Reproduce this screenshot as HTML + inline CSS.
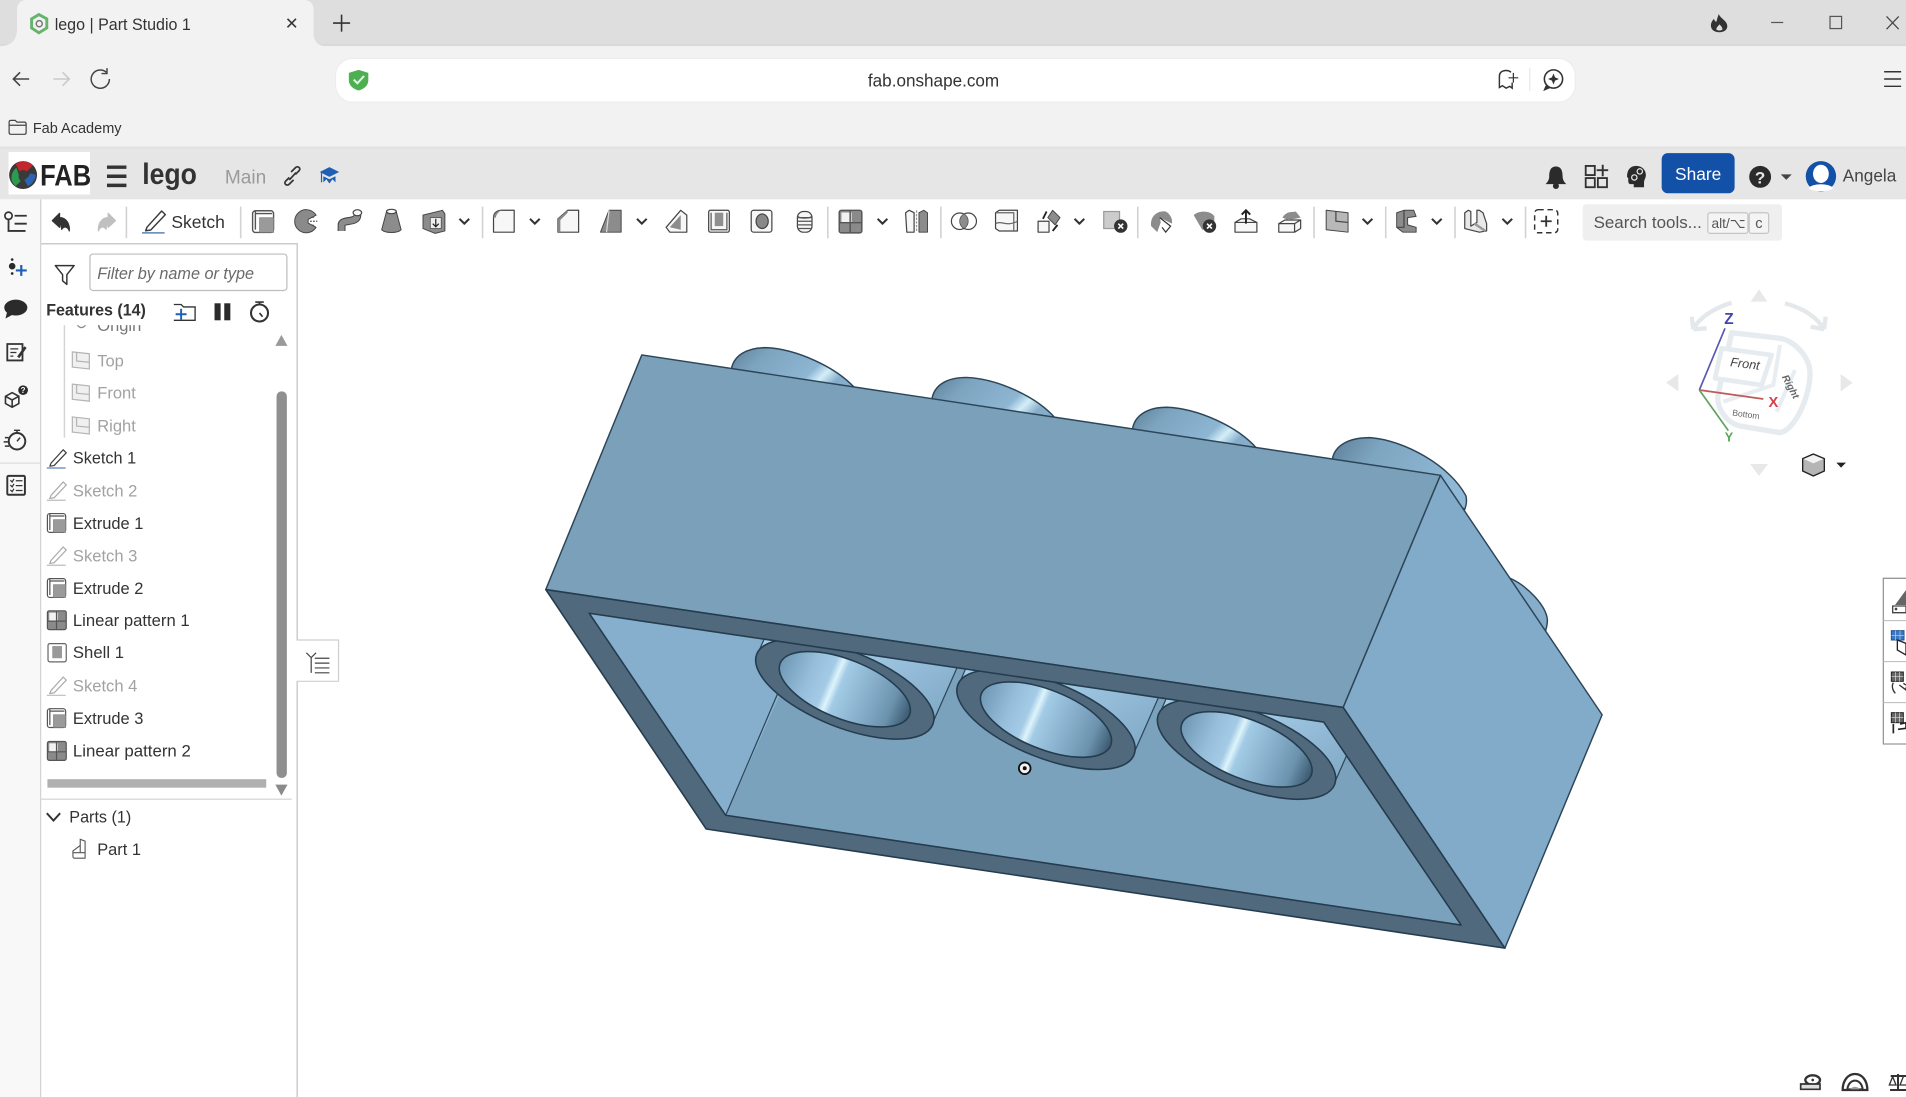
<!DOCTYPE html>
<html><head><meta charset="utf-8"><title>lego | Part Studio 1</title>
<style>
html,body{margin:0;padding:0;background:#fff;overflow:hidden}
svg{display:block}
text{font-family:"Liberation Sans",sans-serif}
.l{fill:none;stroke:#3a3a3a;stroke-width:1;stroke-linejoin:round;stroke-linecap:round}
.g{fill:#8c8c8c;stroke:#444;stroke-width:.8;stroke-linejoin:round}
.w{fill:#f7f7f7;stroke:#444;stroke-width:1;stroke-linejoin:round}
.d{fill:#2b2b2b}
.f{font-size:13.6px;fill:#333}
.m{fill:#a2a2a2}
</style></head>
<body>
<svg xmlns="http://www.w3.org/2000/svg" width="1906" height="1097" viewBox="0 0 1568 902.46" fill="#333">
<defs>
<linearGradient id="hole" gradientUnits="userSpaceOnUse" x1="-52" y1="-22" x2="52" y2="22" gradientTransform="rotate(-21.8)">
<stop offset="0" stop-color="#7099b6"/><stop offset=".22" stop-color="#96bedb"/><stop offset=".36" stop-color="#a4cbe6"/><stop offset=".41" stop-color="#def4fb"/><stop offset=".46" stop-color="#a2cbe6"/><stop offset=".68" stop-color="#86aeca"/><stop offset=".86" stop-color="#6c93ae"/><stop offset="1" stop-color="#3d5b72"/>
</linearGradient>
<linearGradient id="side" gradientUnits="userSpaceOnUse" x1="40" y1="-60" x2="90" y2="20">
<stop offset="0" stop-color="#a6cde8"/><stop offset="1" stop-color="#80a9c6"/>
</linearGradient>
<linearGradient id="stud" x1="0" y1="0" x2="1" y2=".35">
<stop offset="0" stop-color="#5d7f98"/><stop offset=".3" stop-color="#7da4bf"/><stop offset=".75" stop-color="#8db6d3"/><stop offset=".87" stop-color="#d4eef8"/><stop offset="1" stop-color="#86aecb"/>
</linearGradient>
<linearGradient id="stud2" x1="0" y1="0" x2="1" y2=".35">
<stop offset="0" stop-color="#5d7f98"/><stop offset=".35" stop-color="#7ea5c0"/><stop offset="1" stop-color="#8fb9d6"/>
</linearGradient>
<clipPath id="cav"><path d="M484.7 504.5L1089 594L1202 761L597 670.7Z"/></clipPath>
<clipPath id="list"><rect x="36" y="267.500" width="190" height="400"/></clipPath>
<g id="tube">
<path d="M-73.5 -25L73.5 25L129 -101L-18 -151Z" fill="url(#side)" stroke="#2c4558" stroke-width="1"/>
<ellipse rx="78" ry="31.3" transform="rotate(21.8)" fill="#50697d" stroke="#243c4e" stroke-width="1.3"/>
<ellipse rx="57.3" ry="24.3" transform="rotate(21.8)" fill="url(#hole)" stroke="#243c4e" stroke-width="1.3"/>
</g>
<g id="pen"><path class="l" stroke="#777" d="M-5 4L5 -7L7.5 -4.5L-2.5 6L-6 6.5Z"/><path d="M-8.500 8H7" stroke="#5a84b8" stroke-width="1"/></g>
<g id="pen2"><path fill="none" stroke="#aaa" d="M-5 4L5 -7L7.500 -4.500L-2.500 6L-6 6.500Z"/><path d="M-8.500 8H7" stroke="#bbb" stroke-width="1"/></g>
<g id="plane"><path fill="#f0f0f0" stroke="#b5b5b5" d="M-7.500 -6.500L6.500 -5V7.500L-7.500 6Z"/><path fill="none" stroke="#b5b5b5" d="M-4 -6V1L6.500 2"/></g>
<g id="ext"><rect x="-8" y="-7.500" width="15" height="15.500" rx="2" fill="#fff" stroke="#555"/><path fill="none" stroke="#555" d="M-6 -7.500V6M-6 -5.500H6"/><rect x="-3" y="-2.500" width="10" height="10.500" fill="#9a9a9a" stroke="#777" stroke-width=".5"/></g>
<g id="lin"><rect x="-8" y="-7.500" width="15.500" height="15.500" rx="1.500" fill="#8a8a8a" stroke="#555"/><rect x="-6.500" y="-6" width="7" height="7" fill="#f2f2f2"/><path stroke="#555" d="M-.5 -7V8M-8 1H7.500"/></g>
<symbol id="chev" viewBox="0 0 10 6"><path d="M1 1L5 5L9 1" fill="none" stroke="#333" stroke-width="1.700"/></symbol>
</defs>

<!-- Browser chrome -->
<rect width="1568" height="38" fill="#dedede"/>
<rect y="36" width="1568" height="2" fill="#d9d9d9"/>
<rect y="38" width="1568" height="84" fill="#f2f2f2"/>
<path d="M0 38C9 38 14 33 14 24V8C14 3 17 0 22 0H250C255 0 258 3 258 8V28C258 34 262 38 268 38Z" fill="#f2f2f2"/>
<path d="M26 15.500L32 12L38.500 15.500V23L32 27L26 23Z" fill="none" stroke="#66b36a" stroke-width="2.400"/><circle cx="32.300" cy="19.500" r="2.500" fill="none" stroke="#777" stroke-width="1.200"/>
<text x="45" y="24.500" font-size="13.500" textLength="112" lengthAdjust="spacingAndGlyphs" fill="#333">lego | Part Studio 1</text>
<path d="M236.500 15.500L243.500 22.500M243.500 15.500L236.500 22.500" stroke="#333" stroke-width="1.300"/>
<path d="M281 12V26M274 19H288" stroke="#333" stroke-width="1.300"/>
<path d="M1414 11.500C1415 15 1421 17 1421 21.500C1421 24.500 1418.500 26.500 1414.500 26.500C1410.500 26.500 1407.500 24.500 1407.500 21C1407.500 18.500 1409 16.500 1410 15.500C1410.500 17 1411 17.500 1412 18C1412.500 16 1413 14 1414 11.500Z" fill="#333"/><path d="M1414.500 20C1416 21.500 1417 22.500 1417 24C1417 25.500 1412 25.500 1412 24C1412 22.500 1413.500 21.500 1414.500 20Z" fill="#dedede"/>
<path d="M1457 18.500H1467" stroke="#555" stroke-width="1"/>
<rect x="1505.500" y="13.500" width="9.500" height="10" fill="none" stroke="#555" stroke-width="1"/>
<path d="M1552 13.500L1562 24M1562 13.500L1552 24" stroke="#444" stroke-width="1"/>
<path d="M24 65H11M16.500 59.500L11 65L16.500 70.500" fill="none" stroke="#444" stroke-width="1.300"/>
<path d="M57 65H44M49.500 59.500L44 65L49.500 70.500" fill="none" stroke="#c9c9c9" stroke-width="1.300" transform="rotate(180 50.500 65)"/>
<path d="M90 65A7.500 7.500 0 1 1 87.500 59.500M88 56V60.500H83.500" fill="none" stroke="#444" stroke-width="1.200"/>
<rect x="276" y="48" width="1020" height="36" rx="14" fill="#fff" stroke="#ededed"/>
<path d="M295 57.500L303 60V66C303 70.500 299.500 73 295 74.500C290.500 73 287 70.500 287 66V60Z" fill="#4caf50"/><path d="M291 65.500L294 68.500L299.500 62.500" fill="none" stroke="#dff3df" stroke-width="1.700"/>
<text x="768" y="71" font-size="14.500" text-anchor="middle" textLength="108" lengthAdjust="spacingAndGlyphs" fill="#333">fab.onshape.com</text>
<path d="M1243 59.500C1242 58.500 1241 58 1239 58C1235.500 58 1233.500 60 1233.500 62.500V72L1236 70.500L1239 72.500L1242 71L1244 72.500V68" fill="none" stroke="#333" stroke-width="1.200"/><path d="M1245 60V68M1241 64H1249" stroke="#333" stroke-width="1"/>
<path d="M1258.500 56V75" stroke="#e8e8e8"/>
<circle cx="1278" cy="65" r="7.500" fill="none" stroke="#333" stroke-width="1.300"/><path d="M1272 70.500L1270.500 74L1275 72" fill="#333" stroke="#333"/><path d="M1278 60.500L1279.300 63.700L1282.500 65L1279.300 66.300L1278 69.500L1276.700 66.300L1273.500 65L1276.700 63.700Z" fill="#333"/>
<path d="M1550 59H1564M1550 65H1564M1550 71H1564" stroke="#333" stroke-width="1.200"/>
<path d="M7.500 109V100.500C7.500 99.500 8 99 9 99H12.500L14 100.500H20C21 100.500 21.500 101 21.500 102V109C21.500 110 21 110.500 20 110.500H9C8 110.500 7.500 110 7.500 109ZM7.500 103H21.500" fill="none" stroke="#444" stroke-width="1"/>
<text x="27" y="109.500" font-size="12.500" textLength="73" lengthAdjust="spacingAndGlyphs" fill="#333">Fab Academy</text>
<rect y="120.500" width="1568" height="2" fill="#e2e2e2"/>

<!-- Onshape header -->
<rect y="122.500" width="1568" height="41.500" fill="#e6e6e6"/>
<rect x="7" y="125" width="67" height="35" fill="#fff"/>
<circle cx="19" cy="144" r="11.500" fill="#3a3a3a"/>
<path d="M13 135C16 132 23 132 27 136L22 141C20 139.500 18 139.500 16 141Z" fill="#c3272b"/>
<path d="M9.500 148C9 143 11 140 13.500 138L15.500 144C15 146 15.500 147 17 149L13 153C11.500 152 10 150 9.500 148Z" fill="#2d9a4f"/>
<path d="M23 153C26 152 29 148 29.500 144L25 142.500C24 145 22 147 20 148Z" fill="#2a65b5"/>
<text x="33" y="152.500" font-size="24" font-weight="bold" textLength="42" lengthAdjust="spacingAndGlyphs" fill="#222">FAB</text>
<path d="M88 137.500H104M88 145H104M88 152.500H104" stroke="#333" stroke-width="2.800"/>
<text x="117" y="151.500" font-size="24" font-weight="bold" textLength="45" lengthAdjust="spacingAndGlyphs" fill="#333">lego</text>
<text x="185" y="151" font-size="16" textLength="34" lengthAdjust="spacingAndGlyphs" fill="#9a9a9a">Main</text>
<path d="M238 146L235 149C233 151 236 153.500 238 151.500L241.500 148M243 143.500L246 140.500C248 138.500 245 136 243 138L239.500 141.500M238 148L243.500 142" fill="none" stroke="#333" stroke-width="1.400"/>
<path d="M263 141.500L271 137.500L279 141.500L271 145.500Z" fill="#1f5fb5"/><path d="M266 145V150L268.500 147.500L271 151L273.500 147.500L276 150V145L271 147.500Z" fill="#1f5fb5"/><path d="M264.500 142V150" stroke="#1f5fb5"/>
<path d="M1280 137C1284.500 137 1285.500 141 1285.500 145C1285.500 148 1287 150 1288.500 151.500H1271.500C1273 150 1274.500 148 1274.500 145C1274.500 141 1275.500 137 1280 137Z" class="d"/><circle cx="1280" cy="153" r="2.500" class="d"/>
<path d="M1304.500 136.500h7.500v7.500h-7.500zM1304.500 146.500h7.500v7.500h-7.500zM1314.500 146.500h7.500v7.500h-7.500z" fill="none" stroke="#333" stroke-width="1.500"/><path d="M1318.500 135.500V145M1313.500 140H1323" stroke="#333" stroke-width="1.600"/>
<path d="M1346 136.500C1351 136.500 1354 140 1354 144C1354 146.500 1352.500 148 1352.500 150V154H1344V151.500H1341.500C1340 151.500 1339.500 150 1339.500 149V146.500L1338.500 145.500C1338.500 140 1341 136.500 1346 136.500Z" class="d"/><circle cx="1344.500" cy="146" r="2.200" fill="none" stroke="#e6e6e6"/><circle cx="1349" cy="141" r="2.200" fill="none" stroke="#e6e6e6"/>
<rect x="1367" y="126" width="60" height="33" rx="5" fill="#1350a8"/>
<text x="1397" y="148" font-size="14.500" text-anchor="middle" fill="#fff" textLength="38" lengthAdjust="spacingAndGlyphs">Share</text>
<circle cx="1448" cy="145.500" r="9" class="d"/><text x="1448" y="151" font-size="14" font-weight="bold" text-anchor="middle" fill="#e6e6e6">?</text>
<path d="M1465 143.500H1474L1469.500 148Z" fill="#444"/>
<circle cx="1498" cy="145" r="12.500" fill="#1350a8"/><ellipse cx="1498" cy="143" rx="6.500" ry="7.500" fill="#fff"/><path d="M1488 155C1490 150.500 1506 150.500 1508 155C1505 158 1491 158 1488 155Z" fill="#fff"/>
<text x="1516" y="149.500" font-size="14.500" textLength="44" lengthAdjust="spacingAndGlyphs" fill="#444">Angela</text>

<!-- Left rail -->
<rect x="0" y="164" width="33.500" height="739" fill="#f8f8f8"/>
<path d="M33.500 164V903" stroke="#cfcfcf"/>
<path d="M0 381H33" stroke="#dcdcdc"/>
<circle cx="7" cy="177.500" r="3" fill="none" stroke="#333" stroke-width="1.400"/><path d="M7 180.500V190H21M12 177.500H22M12 184H22" fill="none" stroke="#333" stroke-width="1.500"/>
<circle cx="10" cy="219" r="2.700" class="d"/><circle cx="10" cy="213.500" r="1.100" class="d"/><circle cx="10" cy="225" r="1.100" class="d"/><path d="M17.500 218V227M13 222.500H22" stroke="#1f5fb5" stroke-width="1.800"/>
<ellipse cx="13" cy="253" rx="9.500" ry="6.500" class="d"/><path d="M6 256L4.500 262L12 258Z" class="d"/>
<path d="M6 283H18.500V296.500H6Z" fill="none" stroke="#333" stroke-width="1.500"/><path d="M8.500 287H15M8.500 290H13.500M8.500 293H11" stroke="#333"/><path d="M15 294L21 285.500" stroke="#333" stroke-width="2.200"/>
<path d="M4.500 326L10 323L15.500 326V332L10 335L4.500 332ZM4.500 326L10 329L15.500 326M10 329V335" fill="none" stroke="#333" stroke-width="1.300"/><circle cx="19" cy="321" r="4" class="d"/><text x="19" y="323.500" font-size="6.500" font-weight="bold" text-anchor="middle" fill="#fff">?</text>
<circle cx="14" cy="363" r="6.800" fill="none" stroke="#333" stroke-width="1.600"/><path d="M11.500 354H16.500M14 354.500V356M14 363L16.500 360M4 360H7M3 363.500H6.500M4 367H7.500" stroke="#333" stroke-width="1.200"/>
<rect x="6" y="391.500" width="14.500" height="15.500" rx="1" fill="none" stroke="#333" stroke-width="1.600"/><path d="M8.500 395L10 396.500L11.500 394M8.500 399L10 400.500L11.500 398M8.500 403L10 404.500L11.500 402M13 395.500H18.500M13 399.500H18.500M13 403.500H18.500" fill="none" stroke="#333"/>

<!-- Tool bar -->
<g fill="none">
<path d="M50.500 189C53 185 56 187 57 190C57.500 185 55 179 49 179V175.500L43 181.500L49 187V183.500" fill="#333" stroke="#333" stroke-linejoin="round"/>
<path d="M87.500 189C85 185 82 187 81 190C80.500 185 83 179 89 179V175.500L95 181.500L89 187V183.500" fill="#c0c0c0" stroke="#c0c0c0" stroke-linejoin="round"/>
</g>
<path d="M104 170V196M198 170V196M397 170V196M681 170V196M774 170V196M936 170V196M1081 170V196M1140 170V196M1197 170V196M1255 170V196" stroke="#d2d2d2" stroke-width="1.300"/>
<use href="#pen" x="0" y="0" transform="translate(127 182) scale(1.200)"/>
<text x="141" y="187.500" font-size="14.500" textLength="44" lengthAdjust="spacingAndGlyphs" fill="#333">Sketch</text>

<g transform="translate(217 182)"><use href="#ext" transform="scale(1.150)"/></g>
<g transform="translate(252 182)"><path d="M8 -5A9.500 9.500 0 1 0 8 5L1.500 1.500V-1.500Z" fill="#8a8a8a" stroke="#444" stroke-width=".8"/><path d="M3 0H9M5 -3L7 -4M5 3L7 4" stroke="#555" stroke-dasharray="1.500 1"/></g>
<g transform="translate(288 182)"><path d="M-7 8V3C-7 -2 6 2 6 -5" fill="none" stroke="#444" stroke-width="6.500"/><path d="M-7 8V3C-7 -2 6 2 6 -5" fill="none" stroke="#8c8c8c" stroke-width="4.800"/><ellipse cx="6" cy="-7" rx="3.500" ry="2.500" class="w"/></g>
<g transform="translate(322 182)"><path class="g" d="M-4 -8H4L8 7C5 10 -5 10 -8 7Z"/><ellipse cy="-8" rx="4" ry="1.800" class="w"/></g>
<g transform="translate(357 182)"><path class="g" d="M-9 -5L7 -9L9 -6V8L1 10L-9 6Z"/><rect x="-3" y="-3" width="9" height="9" fill="#eee" stroke="#555" stroke-width=".7"/><path d="M1.500 -2V4M-1 2L1.500 4.500L4 2" fill="none" stroke="#222"/></g>
<use href="#chev" x="377" y="179" width="10" height="6"/>
<g transform="translate(415 182)"><path class="w" d="M-9 9V-3C-9 -7 -6 -9 -2 -9H8V9Z"/><path d="M-9 -3C-9 -6 -6 -9 -2 -9C-5 -8 -7 -5 -7 -3Z" fill="#888"/></g>
<use href="#chev" x="435" y="179" width="10" height="6"/>
<g transform="translate(468 182)"><path class="w" d="M-9 9V-2L-1 -9H8V9Z"/><path d="M-9 -2L-1 -9V-7L-7 -1V9H-9Z" fill="#888"/></g>
<g transform="translate(503 182)"><path class="g" d="M-2 -9H8V9H-9Z"/><path d="M-2 -9L-4 9" stroke="#ddd"/></g>
<use href="#chev" x="523" y="179" width="10" height="6"/>
<g transform="translate(557 182)"><path class="w" d="M-9 5L3 -9L8 -5V9H-6Z"/><path d="M-6 5L3 -5V7Z" fill="#8c8c8c"/></g>
<g transform="translate(592 182)"><rect x="-9" y="-9" width="17" height="18" rx="1.500" class="w"/><path d="M-7 -7V7H6V-7" fill="none" stroke="#555"/><rect x="-4" y="-7" width="7" height="11" fill="#909090"/></g>
<g transform="translate(627 182)"><rect x="-9" y="-9" width="17" height="18" rx="2" class="w"/><ellipse cx="0" cy="0" rx="5" ry="6" fill="#888" stroke="#444"/></g>
<g transform="translate(662 182)"><rect x="-6" y="-8" width="12" height="17" rx="5" class="w"/><path d="M-6 -3H6M-6 0H6M-6 3H6M-5 6H5" stroke="#555"/><path d="M-6 -4C-3 -2 3 -2 6 -4" stroke="#555" fill="none"/></g>
<g transform="translate(700 182)"><use href="#lin" transform="scale(1.200)"/></g>
<use href="#chev" x="721" y="179" width="10" height="6"/>
<g transform="translate(754 182)"><path class="w" d="M-9 -7L-6 -9L-2 -7V9H-8Z"/><path class="g" d="M2 -7L6 -9L9 -7V9H2Z"/><path d="M0 -9V9" stroke="#999" stroke-dasharray="2 1"/></g>
<g transform="translate(793 182)"><circle cx="-3.500" r="6.800" fill="#fff" stroke="#444"/><circle cx="3.500" r="6.800" fill="none" stroke="#444"/><path d="M0 -5.800A6.800 6.800 0 0 1 0 5.800A6.800 6.800 0 0 1 0 -5.800Z" fill="#8c8c8c"/></g>
<g transform="translate(828 182)"><path class="w" d="M-9 -7L-6 -9H9V8H-6L-9 6Z"/><path d="M-9 -7H6V8M-9 2C-4 -1 0 5 9 0" fill="none" stroke="#666"/></g>
<g transform="translate(863 182)"><rect x="-9" y="0" width="9" height="9" class="w"/><path class="g" d="M3 -9L9 -3L5 3L-1 -3Z"/><path d="M-5 -2L-2 -8M3 8L7 3" stroke="#222" stroke-width="1.500"/></g>
<use href="#chev" x="883" y="179" width="10" height="6"/>
<g transform="translate(917 182)"><rect x="-9" y="-8" width="13" height="14" fill="#ccc" stroke="#999"/><circle cx="5" cy="4" r="5.500" fill="#333"/><path d="M3 2L7 6M7 2L3 6" stroke="#fff" stroke-width="1.300"/></g>
<g transform="translate(956 182)"><path d="M-9 4C-10 -5 -3 -9 3 -8C7 -6 9 -1 8 2L0 -2L-4 9Z" fill="#8c8c8c"/><path d="M-2 -3L7 4L3 9L0 5" fill="#fff" stroke="#333"/></g>
<g transform="translate(991 182)"><path d="M-9 -5C-5 -9 5 -9 8 -4V5L-2 7Z" fill="#8c8c8c"/><circle cx="4" cy="4" r="5.500" fill="#333"/><path d="M2 2L6 6M6 2L2 6" stroke="#fff" stroke-width="1.300"/></g>
<g transform="translate(1025 182)"><path class="w" d="M-9 1L-4 -2H3L9 1V9H-9ZM-9 1H9"/><path d="M0 -9V2M-3.500 -5.500L0 -9L3.500 -5.500" stroke="#222" stroke-width="1.600" fill="none"/></g>
<g transform="translate(1061 182)"><path class="w" d="M-9 2L-4 -1H9V6L4 9H-9ZM-9 2H4V9M4 2L9 -1"/><path d="M-6 -3C-2 -9 2 -7 5 -8L9 -3L-1 -1Z" fill="#8c8c8c"/></g>
<g transform="translate(1100 182)"><path class="g" d="M-9 -9L9 -7V9L-9 7Z" style="fill:#b8b8b8"/><path d="M-1 -8V0L9 1" fill="none" stroke="#444"/></g>
<use href="#chev" x="1120" y="179" width="10" height="6"/>
<g transform="translate(1157 182)"><path class="g" d="M-8 -7L-2 -9H6L8 -4L1 -3V3L8 5V9H-3L-8 5Z"/><path d="M-2 -9V5L-8 5" fill="none" stroke="#444"/></g>
<use href="#chev" x="1177" y="179" width="10" height="6"/>
<g transform="translate(1214 182)"><path class="w" d="M-9 -7L-6 -9L-4 -8V4L1 1V-9L3 -9L6 -7L9 2V8L3 9L-9 6Z" style="fill:#e8e8e8"/><path d="M-1 2L8 8" stroke="#999" stroke-width="2"/></g>
<use href="#chev" x="1235" y="179" width="10" height="6"/>
<rect x="1262.500" y="172.500" width="19" height="19" rx="3" fill="none" stroke="#333" stroke-width="1.200" stroke-dasharray="4.500 3"/>
<path d="M1272 177.500V186.500M1267.500 182H1276.500" stroke="#333" stroke-width="1.500"/>
<rect x="1302" y="168" width="164" height="30" rx="3" fill="#efefef"/>
<text x="1311" y="187.500" font-size="14" textLength="89" lengthAdjust="spacingAndGlyphs" fill="#555">Search tools...</text>
<rect x="1405" y="175" width="33" height="17" rx="2" fill="#f4f4f4" stroke="#c4c4c4"/>
<text x="1408" y="187.500" font-size="11.500" textLength="28" lengthAdjust="spacingAndGlyphs" fill="#555">alt/⌥</text>
<rect x="1439" y="175" width="16" height="17" rx="2" fill="#f4f4f4" stroke="#c4c4c4"/>
<text x="1447" y="187.500" font-size="12" text-anchor="middle" fill="#555">c</text>

<!-- Feature panel -->
<rect x="34" y="201" width="211" height="702" fill="#fff"/>
<path d="M34 200.500H244.500V527M244.500 560V903" fill="none" stroke="#cbcbcb" stroke-width="1.200"/>
<path d="M45.500 218.500H61L55 226V234L51.500 231V226Z" fill="none" stroke="#333" stroke-width="1.200" stroke-linejoin="round"/>
<rect x="74" y="209" width="162" height="30" rx="2.500" fill="#fff" stroke="#bdbdbd"/>
<text x="80" y="229.500" font-size="14" font-style="italic" textLength="129" lengthAdjust="spacingAndGlyphs" fill="#6a6a6a">Filter by name or type</text>
<text x="38" y="259.500" font-size="13.500" textLength="82" lengthAdjust="spacingAndGlyphs" fill="#333" style="font-weight:600">Features (14)</text>
<path d="M143 250.500H149L151 252.500H160.500V263.500H143" fill="none" stroke="#333" stroke-width="1.100"/><path d="M149 254V263M144.500 258.500H153.500" stroke="#1f5fb5" stroke-width="1.600"/>
<rect x="176.500" y="249.500" width="5" height="14" fill="#2b2b2b"/><rect x="184.500" y="249.500" width="5" height="14" fill="#2b2b2b"/>
<circle cx="213.500" cy="257.500" r="7" fill="none" stroke="#333" stroke-width="1.700"/><path d="M210 248.500H217M213.500 249V251M213.500 257.500L216 260.500" stroke="#333" stroke-width="1.400"/>

<g clip-path="url(#list)">
<path d="M53 264V360" stroke="#d4d4d4" stroke-width="1.200"/>
<circle cx="67" cy="266" r="3.500" fill="none" stroke="#888"/>
<text x="80" y="272.500" class="f" style="fill:#777">Origin</text>
<use href="#plane" transform="translate(67 296)"/><text x="80" y="301.500" class="f m">Top</text>
<use href="#plane" transform="translate(67 322.500)"/><text x="80" y="328" class="f m">Front</text>
<use href="#plane" transform="translate(67 349.500)"/><text x="80" y="355" class="f m">Right</text>
<use href="#pen" transform="translate(47 377)"/><text x="60" y="381.500" class="f" textLength="52" lengthAdjust="spacingAndGlyphs">Sketch 1</text>
<use href="#pen2" transform="translate(47 403.500)"/><text x="60" y="408.500" class="f m" textLength="53" lengthAdjust="spacingAndGlyphs">Sketch 2</text>
<use href="#ext" transform="translate(47 430)"/><text x="60" y="435" class="f" textLength="58" lengthAdjust="spacingAndGlyphs">Extrude 1</text>
<use href="#pen2" transform="translate(47 457)"/><text x="60" y="462" class="f m" textLength="53" lengthAdjust="spacingAndGlyphs">Sketch 3</text>
<use href="#ext" transform="translate(47 483.500)"/><text x="60" y="488.500" class="f" textLength="58" lengthAdjust="spacingAndGlyphs">Extrude 2</text>
<use href="#lin" transform="translate(47 510)"/><text x="60" y="515" class="f" textLength="96" lengthAdjust="spacingAndGlyphs">Linear pattern 1</text>
<g transform="translate(47 537)"><rect x="-7.500" y="-7.500" width="15" height="15" rx="1.500" fill="#fff" stroke="#666"/><rect x="-4" y="-5.500" width="8" height="10" fill="#999"/></g><text x="60" y="541.500" class="f" textLength="42" lengthAdjust="spacingAndGlyphs">Shell 1</text>
<use href="#pen2" transform="translate(47 564)"/><text x="60" y="569" class="f m" textLength="53" lengthAdjust="spacingAndGlyphs">Sketch 4</text>
<use href="#ext" transform="translate(47 590.500)"/><text x="60" y="595.500" class="f" textLength="58" lengthAdjust="spacingAndGlyphs">Extrude 3</text>
<use href="#lin" transform="translate(47 617.500)"/><text x="60" y="622.500" class="f" textLength="97" lengthAdjust="spacingAndGlyphs">Linear pattern 2</text>
</g>
<path d="M226.500 284.500L231.500 275.500L236.500 284.500Z" fill="#9a9a9a"/>
<rect x="227.500" y="322" width="8.500" height="318" rx="4" fill="#8f8f8f"/>
<path d="M226.500 645.500L231.500 654.500L236.500 645.500Z" fill="#8a8a8a"/>
<rect x="39" y="641" width="180" height="7" fill="#b0b0b0"/>
<path d="M34 657.500H240" stroke="#dcdcdc" stroke-width="1.200"/>
<path d="M38.500 669L44 675L49.500 669" fill="none" stroke="#333" stroke-width="1.600"/>
<text x="57" y="676.500" class="f" textLength="51" lengthAdjust="spacingAndGlyphs">Parts (1)</text>
<path d="M60 700L66 695.500V690.500L70 692V706H61C60 706 60 705 60 704ZM60 701.500H70M66 696V701" fill="none" stroke="#555" stroke-width=".9"/>
<text x="80" y="703.500" class="f" textLength="36" lengthAdjust="spacingAndGlyphs">Part 1</text>
<path d="M245 526.500H278.500V560.500H245" fill="#fff" stroke="#cfcfcf"/>
<path d="M252 537L256 541M260 537L256 541V553.500M259 541.500H271M259 545.500H271M259 549.500H271M259 553.500H271" fill="none" stroke="#444" stroke-width="1"/>

<!-- 3D model -->
<path d="M601.500 305C603 292 615 286 630 286C655 287 688 302 704 320Z" fill="url(#stud)" stroke="#2c4558" stroke-width="1.200"/>
<path d="M766.500 329.500C768 316 780 310.500 795 310.500C820 311.500 853 326 869 345Z" fill="url(#stud)" stroke="#2c4558" stroke-width="1.200"/>
<path d="M931.500 354C933 341 945 335 960 335C985 336 1018 350.500 1034 369Z" fill="url(#stud)" stroke="#2c4558" stroke-width="1.200"/>
<path d="M1096 378C1098 366 1110 360 1127 360C1155 362 1193 383 1206 408C1207 413 1206 416 1205 419L1170 400Z" fill="url(#stud2)" stroke="#2c4558" stroke-width="1.200"/>
<path d="M1243 476C1256 482 1272 498 1273 510C1273 514 1272 517 1271.500 519L1240 490Z" fill="#86aecb" stroke="#2c4558" stroke-width="1.200"/>
<path d="M528 292L1185 391L1105 582L449 485Z" fill="#7aa0ba" stroke="#2c4558" stroke-width="1.200" stroke-linejoin="round"/>
<path d="M1185 391L1318 588L1238 780L1105 582Z" fill="#82abc9" stroke="#2c4558" stroke-width="1.200" stroke-linejoin="round"/>
<path d="M597 670.700L659.500 530.500L1089 594L1202 761Z" fill="#7ba2bd"/>
<path d="M484.700 504.500L659.500 530.500L597 670.700Z" fill="#85afcd"/>
<path d="M597 670.700L640 570" stroke="#2c4558" stroke-width="1"/>
<g clip-path="url(#cav)">
<use href="#tube" x="695" y="567"/>
<use href="#tube" x="860.500" y="592"/>
<use href="#tube" x="1025.500" y="616.500"/>
</g>
<path d="M449 485L1105 582L1238 780L581 682ZM484.700 504.500L597 670.700L1202 761L1089 594Z" fill="#50697d" fill-rule="evenodd" stroke="#243c4e" stroke-width="1.300" stroke-linejoin="round"/>
<circle cx="843" cy="632" r="4.800" fill="#f2f2f2" stroke="#111" stroke-width="1.500"/><circle cx="843" cy="632" r="1.600" fill="#111"/>

<!-- View cube -->
<g transform="scale(.82267) translate(1640 270) scale(.33333)">
<path d="M357 58L382 95H332ZM78 338L115 312V364ZM638 338L602 312V364ZM357 618L330 582H384Z" fill="#e6e8ea"/>
<path d="M160 178C175 145 220 115 275 98M160 178L155 140M160 178L200 175" fill="none" stroke="#e4e8ea" stroke-width="13"/>
<path d="M435 100C490 115 530 140 552 178M552 178L557 140M552 178L512 170" fill="none" stroke="#e4e8ea" stroke-width="13"/>
<path d="M275 188L420 205C460 210 510 260 510 310C510 380 465 480 420 488L300 468C260 460 225 410 235 370Z" fill="#fff" stroke="#e6ebef" stroke-width="16" stroke-linejoin="round"/>
<path d="M245 235L395 255L365 345L225 325Z" fill="#fff" stroke="#e6ebef" stroke-width="14" stroke-linejoin="round"/>
<path d="M420 225L400 345L250 395M410 425L465 300" fill="none" stroke="#e8edf1" stroke-width="12"/>
<text x="315" y="294" font-size="38" font-style="italic" text-anchor="middle" transform="rotate(7 315 282)" fill="#444">Front</text>
<text x="452" y="360" font-size="30" font-style="italic" font-weight="bold" text-anchor="middle" transform="rotate(62 452 350)" fill="#666">Right</text>
<text x="318" y="442" font-size="26" text-anchor="middle" transform="rotate(8 318 432)" fill="#666">Bottom</text>
<path d="M178 360L255 175" stroke="#5858b0" stroke-width="5"/>
<path d="M178 360L370 387" stroke="#bf5a5a" stroke-width="5"/>
<path d="M178 360L265 482" stroke="#5ea35e" stroke-width="5"/>
<text x="267" y="162" font-size="46" font-weight="bold" text-anchor="middle" fill="#4444b0">Z</text>
<text x="400" y="411" font-size="44" font-weight="bold" text-anchor="middle" fill="#d8404a">X</text>
<text x="267" y="514" font-size="38" font-weight="bold" text-anchor="middle" fill="#55a855">Y</text>
<path d="M520 552L553 566V603L520 618L488 603V566Z" fill="#b5b5b5" stroke="#222" stroke-width="4" stroke-linejoin="round"/>
<path d="M520 555L550 567L520 580L491 567Z" fill="#f2f2f2"/>
<path d="M589 578H618L603 593Z" fill="#222"/>
</g>

<!-- Right side flyout -->
<g transform="scale(.82267) translate(1760 560) scale(.33333)">
<path d="M438 55H370V552H438" fill="#fff" stroke="#999" stroke-width="4"/>
<path d="M370 182H438M370 305H438M370 428H438" stroke="#bbb" stroke-width="3"/>
<path d="M405 135L438 90V135Z" fill="#666"/><path d="M398 138H438V158H398Z" fill="#fff" stroke="#444" stroke-width="4"/><circle cx="408" cy="147" r="4" fill="#444"/>
<rect x="394" y="212" width="38" height="28" fill="#3a78c4" stroke="#1f4f90" stroke-width="3"/><path d="M394 226H432M407 212V240M420 212V240" stroke="#bcd6f0" stroke-width="2"/>
<path d="M412 240L438 250V285L412 270Z" fill="#fff" stroke="#222" stroke-width="4"/>
<rect x="394" y="336" width="36" height="28" fill="#666" stroke="#222" stroke-width="3"/><path d="M394 350H430M406 336V364M418 336V364" stroke="#ddd" stroke-width="2"/>
<path d="M400 368C394 378 398 392 406 400M430 370L438 375M418 375L438 390V382" fill="none" stroke="#333" stroke-width="4"/>
<rect x="394" y="458" width="36" height="30" fill="#666" stroke="#222" stroke-width="3"/><path d="M394 472H430M406 458V488M418 458V488" stroke="#ddd" stroke-width="2"/>
<path d="M400 492V520M420 492L438 488V505L414 508" fill="none" stroke="#222" stroke-width="5"/>
</g>

<!-- Bottom right tools -->
<g transform="scale(.82267) translate(1760 1050) scale(.33333)">
<ellipse cx="158" cy="90" rx="22" ry="14" fill="#fff" stroke="#333" stroke-width="7"/><circle cx="158" cy="90" r="4" fill="#333"/>
<path d="M122 102H180V118H122Z" fill="#ddd" stroke="#333" stroke-width="5"/>
<path d="M248 120C248 90 265 72 285 72C305 72 322 90 322 120Z" fill="#fff" stroke="#333" stroke-width="7"/><path d="M262 118C264 100 275 92 285 92C295 92 306 100 308 118Z" fill="none" stroke="#333" stroke-width="6"/><path d="M272 118C274 108 296 108 298 118" fill="#999"/>
<path d="M390 120H438M414 72V120M392 78H438" stroke="#333" stroke-width="6"/><path d="M398 80L388 105H408ZM430 80L420 105H438" fill="none" stroke="#333" stroke-width="4"/>
</g>
</svg>
</body></html>
